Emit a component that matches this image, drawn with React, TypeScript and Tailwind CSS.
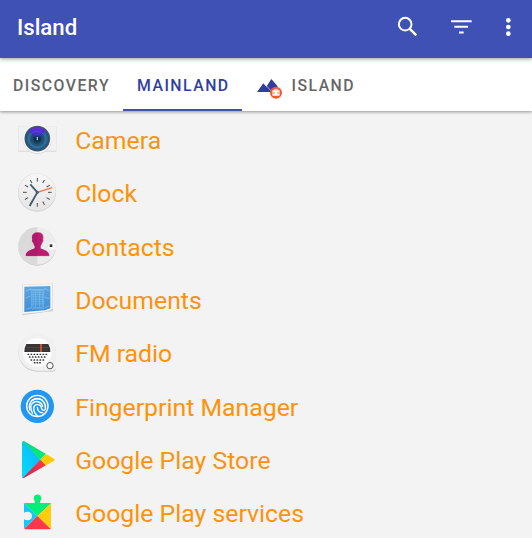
import React from 'react';

function CameraIcon() {
  return (
    <>
      <defs>
        <radialGradient id="lens" cx=".5" cy=".5" r=".5">
          <stop offset="0" stopColor="#0b1a2c" />
          <stop offset=".35" stopColor="#17405f" />
          <stop offset=".7" stopColor="#2f6c9a" />
          <stop offset=".86" stopColor="#24527a" />
          <stop offset="1" stopColor="#4b5b6b" />
        </radialGradient>
        <linearGradient id="flare" x1="0" x2="0" y1="0" y2="1">
          <stop offset="0" stopColor="#6a2ad4" />
          <stop offset=".5" stopColor="#4630d4" />
          <stop offset="1" stopColor="#122a50" />
        </linearGradient>
      </defs>
      <rect x="24" y="34" width="115" height="76" rx="3" fill="#d8d8d8" />
      <rect x="25" y="34" width="113" height="73" rx="3" fill="#f1f1f1" />
      <circle cx="82" cy="73" r="44" fill="#dedede" />
      <circle cx="82" cy="71" r="43" fill="#f8f8f8" />
      <circle cx="82" cy="71" r="38.5" fill="url(#lens)" />
      <path d="M82 73 56 48a35 35 0 0 1 52 0Z" fill="url(#flare)" />
      <circle cx="82" cy="73" r="24" fill="none" stroke="#57a0c5" strokeWidth="1.5" opacity=".4" />
      <circle cx="82" cy="73" r="15" fill="none" stroke="#398299" strokeWidth="1.5" opacity=".5" />
      <circle cx="82" cy="72" r="5" fill="#0d2c3b" />
      <path d="M80 66h4v10h-4z" fill="#73d9ec" />
    </>
  );
}

function ClockIcon() {
  return (
    <>
      <defs>
        <linearGradient id="face" x1="0" x2="0" y1="0" y2="1">
          <stop stopColor="#f7f7f7" />
          <stop offset="1" stopColor="#e5e5e5" />
        </linearGradient>
      </defs>
      <circle cx="81" cy="74" r="57" fill="#cdcdcd" />
      <circle cx="81" cy="72.5" r="56" fill="url(#face)" stroke="#dedede" strokeWidth="1" />
      {[0, 30, 60, 90, 120, 150, 180, 210, 240, 270, 300, 330].map((a) => (
        <path key={a} d="M82 30v11" stroke="#4a4f54" strokeWidth="3" transform={`rotate(${a} 82 73)`} />
      ))}
      <path d="m61 49 21 24-23 41" fill="none" stroke="#435d6d" strokeWidth="5.5" strokeLinejoin="round" />
      <path d="m82 73 45-14" stroke="#f2754e" strokeWidth="3.5" />
      <circle cx="82" cy="73" r="4.5" fill="#435d6d" />
    </>
  );
}

function ContactsIcon() {
  return (
    <>
      <circle cx="81" cy="74" r="57" fill="#c8c8c8" />
      <circle cx="81" cy="72" r="56.5" fill="#ececec" />
      <path d="M82 15.5a56.5 56.5 0 0 0 0 113Z" fill="#dadada" />
      <path d="M138 61h-17q-7 0-7 7v8q0 7 7 7h17Z" fill="#fafafa" stroke="#ddd" />
      <rect x="119" y="67" width="8" height="8" fill="#333" />
      <path
        d="M82 32c-13 0-17 9-14 20-2 1-1 9 3 11 1 5 2 7 4 9v7c-3 5-27 5-27 22h69c0-17-23-17-26-22v-7c2-2 3-4 4-9 4-2 5-10 3-11 3-11-1-20-13-20Z"
        fill="#ba1d70"
        stroke="#ba1d70"
        strokeWidth="2"
      />
      <path d="M82 32c-13 0-17 9-14 20-2 1-1 9 3 11 1 5 2 7 4 9v7c-3 5-27 5-27 22h34Z" fill="#ae1a6c" />
    </>
  );
}

function DocumentsIcon() {
  return (
    <>
      <defs>
        <linearGradient id="blueprint" x1="0" x2="0" y1="0" y2="1">
          <stop stopColor="#60a6de" />
          <stop offset="1" stopColor="#3d8cd6" />
        </linearGradient>
      </defs>
      <path d="m36 29 92-3 1 82-91 12Z" fill="#c2c2c2" />
      <path d="m37 29 90-2 1 74-14 8-76 8Z" fill="#f6f6f6" />
      <path d="m43 35 78-2v67l-17 6-61 5Z" fill="url(#blueprint)" />
      <path
        d="M65 47h36v54H65zM69 52h28v45H69zM69 59h28M69 66h28M69 73h28M69 80h28M69 87h28M77 52v45M89 52v45"
        fill="none"
        stroke="#93d6fa"
        strokeWidth="1.6"
        opacity=".8"
      />
      <path
        d="m48 49 14-8M48 69l13-6M48 103l15-5M103 39l13 8M104 67l13 4M104 99l14-7M60 44h46"
        stroke="#a9d5f7"
        strokeWidth="2"
        opacity=".8"
      />
      <path d="m114 109 14-7v6Z" fill="#d5d5d5" />
    </>
  );
}

function RadioIcon() {
  const rows = [
    { y: 79, dots: [55, 64, 73, 82, 91, 100, 109] },
    { y: 87, dots: [59, 68, 77, 86, 95, 104] },
    { y: 96, dots: [64, 73, 82, 91, 100] },
    { y: 104, dots: [74, 82, 90] },
  ];
  return (
    <>
      <path d="M82 18a56 56 0 1 0 0 113h46q10 0 10-10V74a56 56 0 0 0-56-56Z" fill="#cecece" />
      <path d="M82 16a56 56 0 1 0 0 112h46q10 0 10-10V72a56 56 0 0 0-56-56Z" fill="#f0f0f0" />
      <circle cx="82" cy="73" r="43" fill="#fcfcfc" />
      <path d="M49 48h66q6 9 6 24H43q0-14 6-24Z" fill="#393535" />
      <path d="M50 59h65M54 64v4M62 64v4M70 64v4M78 64v4M86 64v4M102 64v4M110 64v4" stroke="#665d5b" strokeWidth="1.5" />
      <path d="M90 48h6v24h-6z" fill="#c9512e" />
      {rows.map(({ y, dots }) =>
        dots.map((x) => <rect key={`${x}-${y}`} x={x - 2.6} y={y - 2} width="5.2" height="4.2" rx="1" fill="#393735" />)
      )}
      <circle cx="120" cy="113" r="9.5" fill="#f9f9f9" stroke="#555" strokeWidth="3" />
    </>
  );
}

function FingerprintIcon() {
  return (
    <>
      <circle cx="82" cy="73" r="50" fill="#2297f1" />
      <g fill="none" stroke="#fff" strokeWidth="4.2" strokeLinecap="round">
        <circle cx="82" cy="72" r="32" />
        <path d="M60 84c-6-17 3-33 21-34 16 0 28 14 25 31-2 6-10 5-11-1-2-16-23-16-24-1 0 9 4 17 12 23" />
        <path d="M67 55c9-7 20-7 29-1" />
        <path d="M67 93c-6-13-6-22-1-28 10-11 28-7 32 8" />
        <path d="M82 76c0 10 7 17 16 16" />
      </g>
    </>
  );
}

function PlayStoreIcon() {
  return (
    <>
      <defs>
        <linearGradient id="playblue" x1="1" x2="0" y1="0" y2="1">
          <stop stopColor="#12aff5" />
          <stop offset="1" stopColor="#00dfff" />
        </linearGradient>
        <linearGradient id="playgreen" x1="0" x2="1" y1="0" y2="1">
          <stop stopColor="#00d676" />
          <stop offset="1" stopColor="#00f373" />
        </linearGradient>
        <linearGradient id="playred" x1="1" x2="0" y1="0" y2="1">
          <stop stopColor="#ff3a46" />
          <stop offset="1" stopColor="#d3204b" />
        </linearGradient>
      </defs>
      <path d="M36 23q0-4 4-4l52 55-52 55q-4 0-4-4Z" fill="url(#playblue)" />
      <path d="M38 18q2-1 5 1l65 38-17 17Z" fill="url(#playgreen)" />
      <path d="m38 129 53-55 17 17-65 37q-3 2-5 1Z" fill="url(#playred)" />
      <path d="m108 57 24 14q4 3 0 6l-24 14-17-17Z" fill="#ffc900" />
    </>
  );
}

function PlayServicesIcon() {
  return (
    <>
      <path d="m82 84-39 39q-1-1-1-3V94c15 7 24 0 24-10s-9-17-24-10V48q0-2 1-3Z" fill="#12c9fa" />
      <path d="M43 45q2 0 4 0h28v-5a11.5 11.5 0 1 1 15 0v5h31l2 1-41 38Z" fill="#00ef76" />
      <path d="m123 46-41 38 40 39 1-3V48Z" fill="#ffcd0b" />
      <path d="m43 123 39-39 40 39-2 1H46Z" fill="#fb3849" />
    </>
  );
}

const apps = [
  { name: 'Camera', Icon: CameraIcon },
  { name: 'Clock', Icon: ClockIcon },
  { name: 'Contacts', Icon: ContactsIcon },
  { name: 'Documents', Icon: DocumentsIcon },
  { name: 'FM radio', Icon: RadioIcon },
  { name: 'Fingerprint Manager', Icon: FingerprintIcon },
  { name: 'Google Play Store', Icon: PlayStoreIcon },
  { name: 'Google Play services', Icon: PlayServicesIcon },
];

function BadgedIslandIcon() {
  return (
    <svg viewBox="0 0 84 78" className="mt-[5px] h-[26px] w-7 shrink-0">
      <path d="m0 54 19-26 9 10L43 15l19 22-8 17Z" fill="#303f9f" />
      <path d="m29 36 15 17" stroke="#fff" strokeWidth="2.2" opacity=".75" />
      <circle cx="57" cy="56" r="18" fill="#f4592b" />
      <path d="M53 50v-4h9v4" fill="none" stroke="#fff" strokeWidth="2.5" />
      <rect x="46" y="49" width="22" height="16" rx="2" fill="#fff" />
      <path d="M46 57h8m6 0h8" stroke="#f4592b" strokeWidth="2.5" />
    </svg>
  );
}

export default function App() {
  return (
    <div className="flex h-[538px] w-[532px] flex-col overflow-hidden bg-[#f3f3f3] font-['Roboto',sans-serif]">
      <header className="z-20 flex h-[58px] shrink-0 items-center bg-[#3f51b5] pl-[17px] text-white shadow-[0_1px_4px_rgba(0,0,0,0.4)]">
        <h1 className="pb-[4px] text-[22.2px] font-medium leading-7">Island</h1>
        <svg viewBox="0 0 456 174" className="ml-auto h-[58px] w-[152px]" aria-label="Toolbar actions">
          <circle cx="75.5" cy="72.5" r="19" fill="none" stroke="#fff" strokeWidth="6" />
          <path d="m88 85 21 21" stroke="#fff" strokeWidth="7.5" />
          <path d="M213 63.5h62M223 80.5h41M237 97.5h14" stroke="#fff" strokeWidth="6" />
          <circle cx="385" cy="61" r="7" fill="#fff" />
          <circle cx="385" cy="81" r="7" fill="#fff" />
          <circle cx="385" cy="101" r="7" fill="#fff" />
        </svg>
      </header>
      <nav className="z-10 flex h-[53px] shrink-0 bg-white text-[15.8px] font-medium tracking-[1.48px] text-[#666] shadow-[0_1px_3px_rgba(0,0,0,0.4)]">
        <div className="flex w-[123px] items-center pl-[13px] pt-[2px]">DISCOVERY</div>
        <div className="flex w-[119px] items-center border-b-2 border-[#3f51b5] pl-[14px] pt-[4px] text-[#303f9f]">MAINLAND</div>
        <div className="flex items-center pl-[15px]">
          <BadgedIslandIcon />
          <span className="ml-[6.5px] pt-[2px]">ISLAND</span>
        </div>
      </nav>
      <main className="pt-[3.75px]">
        {apps.map(({ name, Icon }) => (
          <div key={name} className="flex h-[53.38px] items-start pl-[10px]">
            <svg viewBox="0 0 180 150" className="h-[50px] w-[60px] shrink-0">
              <Icon />
            </svg>
            <span className="ml-[5.2px] text-[24.8px] leading-[51px] text-[#fb930c]">{name}</span>
          </div>
        ))}
      </main>
    </div>
  );
}
